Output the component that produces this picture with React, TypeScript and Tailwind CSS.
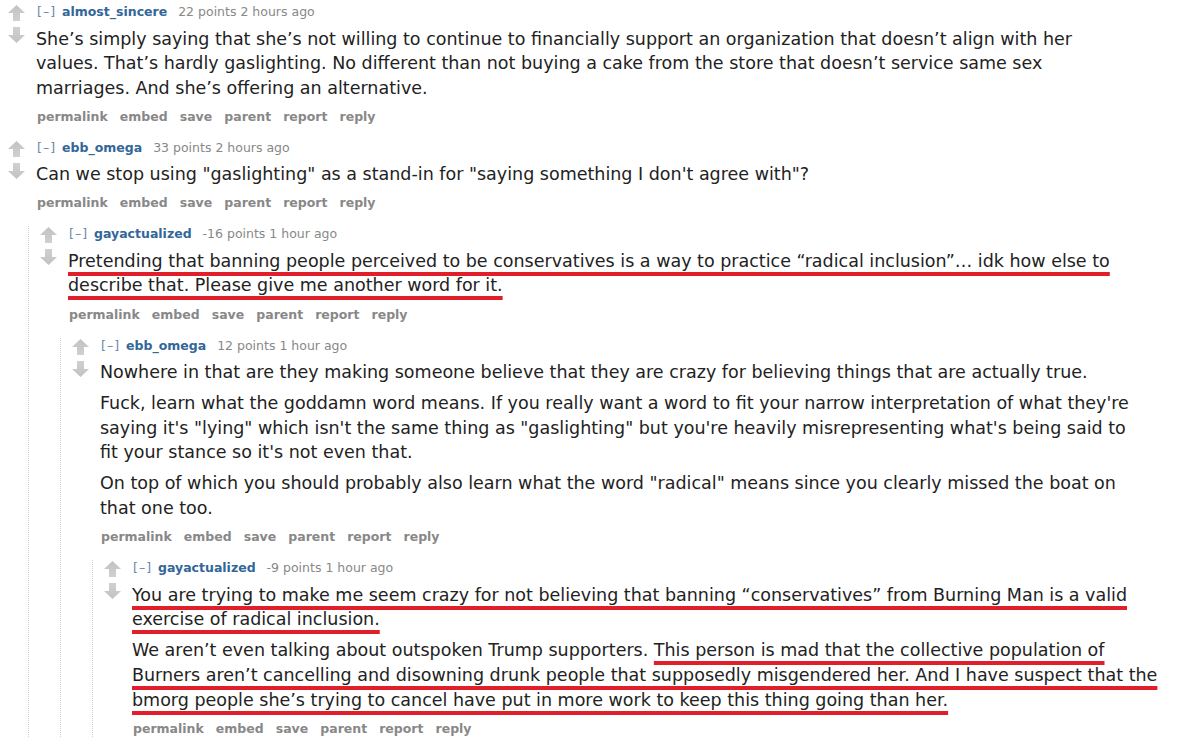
import React from "react";

type Seg = { t: string; u?: boolean };
type Line = Seg[];
type Para = Line[];

interface C {
  user: string;
  points: string;
  time: string;
  paras: Para[];
  child?: C;
}

const L = (...segs: (string | Seg)[]): Line =>
  segs.map((s) => (typeof s === "string" ? { t: s } : s));
const U = (t: string): Seg => ({ t, u: true });

const data: C[] = [
  {
    user: "almost_sincere",
    points: "22 points",
    time: "2 hours ago",
    paras: [
      [
        L("She’s simply saying that she’s not willing to continue to financially support an organization that doesn’t align with her"),
        L("values. That’s hardly gaslighting. No different than not buying a cake from the store that doesn’t service same sex"),
        L("marriages. And she’s offering an alternative."),
      ],
    ],
  },
  {
    user: "ebb_omega",
    points: "33 points",
    time: "2 hours ago",
    paras: [[L('Can we stop using "gaslighting" as a stand-in for "saying something I don\'t agree with"?')]],
    child: {
      user: "gayactualized",
      points: "-16 points",
      time: "1 hour ago",
      paras: [
        [
          L(U("Pretending that banning people perceived to be conservatives is a way to practice “radical inclusion”… idk how else to")),
          L(U("describe that. Please give me another word for it.")),
        ],
      ],
      child: {
        user: "ebb_omega",
        points: "12 points",
        time: "1 hour ago",
        paras: [
          [L("Nowhere in that are they making someone believe that they are crazy for believing things that are actually true.")],
          [
            L("Fuck, learn what the goddamn word means. If you really want a word to fit your narrow interpretation of what they're"),
            L('saying it\'s "lying" which isn\'t the same thing as "gaslighting" but you\'re heavily misrepresenting what\'s being said to'),
            L("fit your stance so it's not even that."),
          ],
          [
            L('On top of which you should probably also learn what the word "radical" means since you clearly missed the boat on'),
            L("that one too."),
          ],
        ],
        child: {
          user: "gayactualized",
          points: "-9 points",
          time: "1 hour ago",
          paras: [
            [
              L(U("You are trying to make me seem crazy for not believing that banning “conservatives” from Burning Man is a valid ")),
              L(U("exercise of radical inclusion.")),
            ],
            [
              L("We aren’t even talking about outspoken Trump supporters. ", U("This person is mad that the collective population of")),
              L(U("Burners aren’t cancelling and disowning drunk people that supposedly misgendered her. And I have suspect that the")),
              L(U("bmorg people she’s trying to cancel have put in more work to keep this thing going than her.")),
            ],
          ],
        },
      },
    },
  },
];

function Arrow({ down }: { down?: boolean }) {
  return (
    <svg width="17" height="16" viewBox="0 0 17 16" className={down ? "rotate-180" : ""}>
      <defs>
        <linearGradient id="ag" x1="0" y1="0" x2="0" y2="1">
          <stop offset="0" stopColor="#c2c2c2" />
          <stop offset="1" stopColor="#d0d0d0" />
        </linearGradient>
      </defs>
      <polygon points="8.5,0 17,8 12,8 12,16 5,16 5,8 0,8" fill="url(#ag)" />
    </svg>
  );
}

function Comment({ c }: { c: C }) {
  return (
    <div>
      <div className="flex">
        <div className="w-[36px] shrink-0 pl-[7.5px] pt-[1px] flex flex-col">
          <Arrow />
          <div className="mt-[6px]">
            <Arrow down />
          </div>
        </div>
        <div className="flex-1 min-w-0">
          <div className="h-[16px] leading-[16px] text-[12.5px] whitespace-nowrap">
            <span className="text-[#6a86a8] mr-[6px] tracking-[1px] ml-[1px]">[–]</span>
            <span className="text-[#336699] font-bold mr-[11px]">{c.user}</span>
            <span className="text-[#888]">{c.points} {c.time}</span>
          </div>
          <div className="mt-[6.5px] text-[17.5px] leading-[24.6px] text-[#222]">
            {c.paras.map((p, pi) => (
              <div key={pi} className={pi > 0 ? "mt-[6.5px]" : ""}>
                {p.map((line, li) => (
                  <div key={li} className="whitespace-nowrap">
                    {line.map((s, si) =>
                      s.u ? (
                        <span
                          key={si}
                          className="underline decoration-[#e01f2b] decoration-[3.5px] underline-offset-[5px] [text-decoration-skip-ink:none]"
                        >
                          {s.t}
                        </span>
                      ) : (
                        <span key={si}>{s.t}</span>
                      )
                    )}
                  </div>
                ))}
              </div>
            ))}
          </div>
          <div className="mt-[8.5px] h-[16px] leading-[16px] text-[12.5px] font-bold text-[#888] flex gap-[12px] whitespace-nowrap pl-[1px]">
            <span>permalink</span>
            <span>embed</span>
            <span>save</span>
            <span>parent</span>
            <span>report</span>
            <span>reply</span>
          </div>
        </div>
      </div>
      {c.child && (
        <div className="ml-[28px] mt-[15px] border-l border-dotted border-[#cfcfcf] pl-[3px]">
          <Comment c={c.child} />
        </div>
      )}
    </div>
  );
}

export default function App() {
  return (
    <div
      className="w-[1182px] h-[740px] overflow-hidden bg-white pt-[4px]"
      style={{ fontFamily: "'DejaVu Sans', Verdana, sans-serif" }}
    >
      <div className="flex flex-col gap-[15px]">
        {data.map((c, i) => (
          <Comment key={i} c={c} />
        ))}
      </div>
    </div>
  );
}
